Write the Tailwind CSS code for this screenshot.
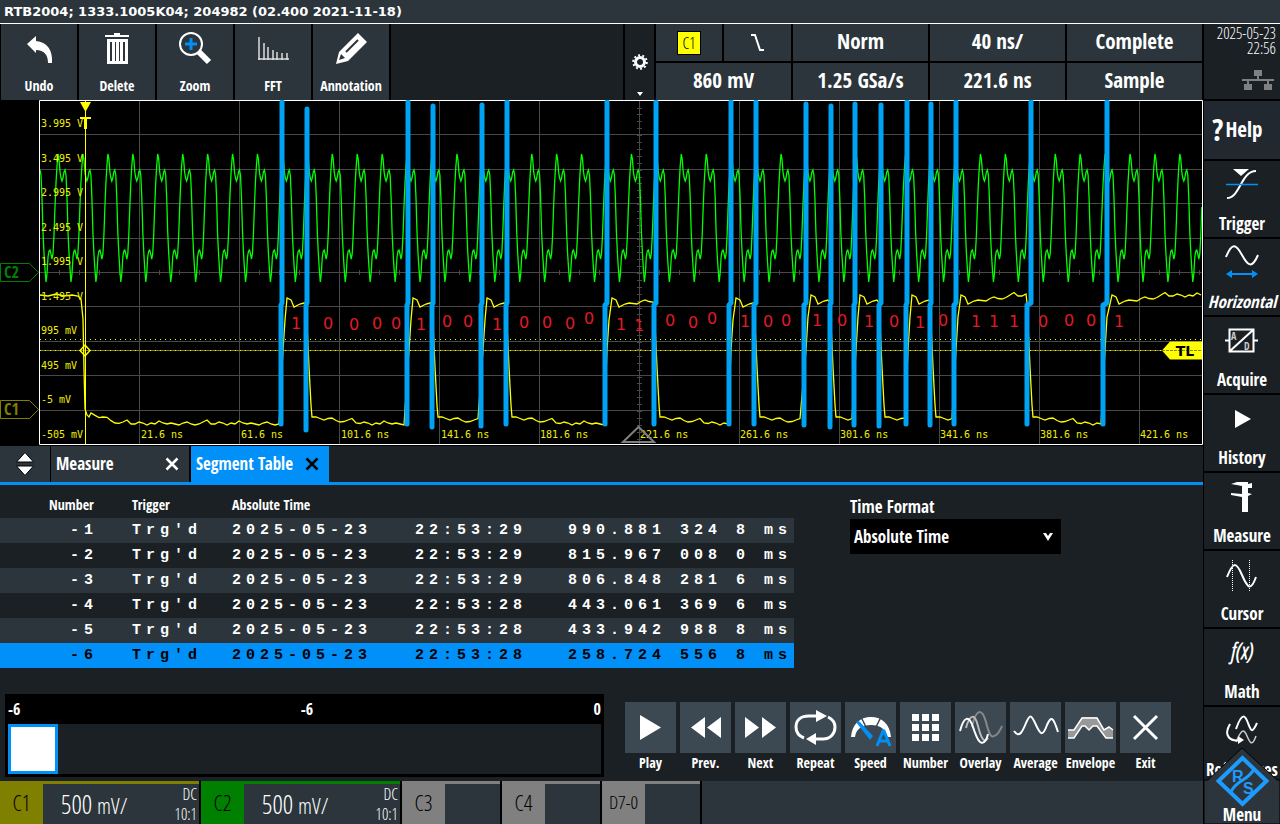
<!DOCTYPE html>
<html lang="en">
<head>
    <meta charset="UTF-8">
    <meta name="viewport" content="width=device-width, initial-scale=1.0">
    <title>RTB2004</title>
    <script src="https://cdn.jsdelivr.net/npm/@tailwindcss/browser@4"></script>
</head>

<body class="bg-black text-white min-h-screen flex flex-col font-['Liberation_Sans_Narrow','Open_Sans_Condensed','Noto_Sans',sans-serif]">

    <!-- title bar -->
    <header class="h-6 shrink-0 bg-[#2b353b] border-b border-white px-1 text-[13px] leading-6 font-bold font-['DejaVu_Sans',sans-serif]">RTB2004; 1333.1005K04; 204982 (02.400 2021-11-18)</header>

    <div class="flex flex-1">
        <div class="flex-1 min-w-0 flex flex-col">

            <!-- toolbar -->
            <div class="flex gap-0.5 h-[76px] pl-px pr-px">
                <button class="w-[76px] bg-[#2b353b] flex flex-col items-center justify-between pt-1.5 pb-1 text-sm leading-5 font-bold">
                    <svg class="size-9" viewBox="0 0 36 36"><path d="M6 14 15 6v5c11 1 17 9 16 22h-4c0-8-4-13-12-13v3z" fill="#fff"/></svg>
                    Undo
                </button>
                <button class="w-[76px] bg-[#2b353b] flex flex-col items-center justify-between pt-1.5 pb-1 text-sm leading-5 font-bold">
                    <svg class="size-9" viewBox="0 0 36 36"><path d="M6 5h9V3h6v2h9v2H6zM8 9h21v25H8zM11 12v19h2V12zm5 0v19h1V12zm4 0v19h1V12zm4 0v19h2V12z" fill="#fff" fill-rule="evenodd"/></svg>
                    Delete
                </button>
                <button class="w-[76px] bg-[#2b353b] flex flex-col items-center justify-between pt-1.5 pb-1 text-sm leading-5 font-bold">
                    <svg class="size-9" viewBox="0 0 36 36" fill="none"><path d="m22 22 10 10" stroke="#fff" stroke-width="6"/><circle cx="14" cy="14" r="11" fill="#2b353b" stroke="#fff" stroke-width="2"/><path d="M14 8v12M8 14h12" stroke="#0090f8" stroke-width="3"/></svg>
                    Zoom
                </button>
                <button class="w-[76px] bg-[#2b353b] flex flex-col items-center justify-between pt-1.5 pb-1 text-sm leading-5 font-bold">
                    <svg class="size-9" viewBox="0 0 36 36" fill="none" stroke="#ddd" stroke-width="1.5"><path d="M3 29h31M4 30V7M9 30V13M13 30V17M18 30V20M22 30V22M27 30V23M32 30V23"/></svg>
                    FFT
                </button>
                <button class="w-[76px] bg-[#2b353b] flex flex-col items-center justify-between pt-1.5 pb-1 text-sm leading-5 font-bold">
                    <svg class="size-9" viewBox="0 0 36 36"><path d="M25 3 34 12 15 31 3 34 6 22zM8 24l-2 6 6-2z" fill="#fff" fill-rule="evenodd"/><path d="m13 22 12-12" stroke="#2b353b" stroke-width="2"/></svg>
                    Annotation
                </button>
                <div class="flex-1 bg-[#1a2024]"></div>
                <button aria-label="Settings" class="w-[29px] bg-[#1a2024] flex flex-col items-center justify-end gap-[22px] pb-1">
                    <svg class="size-4" viewBox="0 0 16 16" fill="none" stroke="#fff"><circle cx="8" cy="8" r="4.5" stroke-width="3"/><circle cx="8" cy="8" r="6.8" stroke-width="2" stroke-dasharray="2 2.27"/></svg>
                    <svg class="w-1.5 h-1" viewBox="0 0 6 4"><path d="M0 0h6L3 4z" fill="#fff"/></svg>
                </button>
                <!-- status cells -->
                <div class="w-[546px] grid grid-cols-[66px_67px_repeat(3,1fr)] grid-rows-2 gap-0.5 text-[21px] text-center">
                    <button class="bg-[#2b353b] grid place-items-center"><span class="bg-[#ff0] text-black w-6 h-6 border border-black text-base leading-[22px] font-['Open_Sans_Condensed_Light',sans-serif]">C1</span></button>
                    <button aria-label="Slope" class="bg-[#2b353b] grid place-items-center"><svg class="w-4 h-5" viewBox="0 0 16 20" fill="none" stroke="#fff" stroke-width="2"><path d="M1 2h4l5 15h4"/></svg></button>
                    <button class="bg-[#2b353b] pb-px">Norm</button>
                    <button class="bg-[#2b353b] pb-px">40 ns/</button>
                    <button class="bg-[#2b353b] pb-px">Complete</button>
                    <button class="bg-[#2b353b] pb-px col-span-2">860 mV</button>
                    <button class="bg-[#2b353b] pb-px">1.25 GSa/s</button>
                    <button class="bg-[#2b353b] pb-px">221.6 ns</button>
                    <button class="bg-[#2b353b] pb-px">Sample</button>
                </div>
            </div>

            <!-- waveform display -->
            <svg id="scope" class="block w-full" viewBox="0 100 1203 345" fill="none">
                <g id="grid" stroke="#484848"></g>
                <path d="M40 339.500h1162" stroke="#ff0" stroke-dasharray="1 4"/>
                <path d="M40 350.500h1162" stroke="#808000"/>
                <path d="M40 350.500h1162" stroke="#ff0" stroke-dasharray="1 4"/>
                <path id="c2" stroke="#0f0" stroke-width="1.3"/>
                <path id="c1" stroke="#ff0" stroke-width="1.3"/>
                <g id="labels" fill="#f0f000" class="text-[10px] font-['DejaVu_Sans_Mono',monospace]"></g>
                <path d="M85.500 100v344" stroke="#ff0"/>
                <path d="M80 102h11l-5 9h-1zM80 117h11v2h-4v10h-3v-10h-4z" fill="#ff0"/>
                <path d="m85 345 5 5.500-5 5.500-5-5.500z" stroke="#ff0" stroke-width="1.500"/>
                <path d="M638.500 427 623 442h31z" stroke="#808080" stroke-width="2"/>
                <path d="m1162 350.500 8-9h32v18h-32z" fill="#ff0"/>
                <path d="M1162 350.500h40" stroke="#880" stroke-dasharray="3 1"/>
                <text x="1185" y="356" text-anchor="middle" fill="#000" class="text-sm font-bold font-['DejaVu_Sans',sans-serif]">TL</text>
                <path d="M39.500 444.500v-344h1163v344z" stroke="#fff"/>
                <g id="bars" stroke="#00a2f3" stroke-width="5" stroke-linecap="round" stroke-linejoin="round"></g>
                <g id="bits" fill="#e01b24" text-anchor="middle" class="text-base font-['DejaVu_Sans',sans-serif]"></g>
                <path d="M.5 263.500h29l9 9-9 9h-29z" stroke="#008000"/>
                <path d="M.5 400.500h29l9 9-9 9h-29z" stroke="#808000"/>
                <text x="4" y="278" fill="#008000" class="text-base font-bold">C2</text>
                <text x="4" y="415" fill="#808000" class="text-base font-bold">C1</text>
            </svg>

            <!-- tabs -->
            <div class="mt-px bg-[#1a2024] border-b-3 border-[#0090f8] flex h-[39px]">
                <button aria-label="Resize" class="w-[50px] bg-[#2b353b] grid place-items-center"><svg class="w-5 h-6" viewBox="0 0 20 24" fill="#fff" stroke="#000"><path d="M10 .5 18.500 10h-17zM10 23.500 18.500 14h-17z"/></svg></button>
                <div class="w-[141px] bg-[#2b353b] border-l border-r-2 border-black flex items-center justify-between pl-[5px] pr-2.5">
                    <button class="text-[17px] font-bold">Measure</button>
                    <button aria-label="Close Measure"><svg class="size-3.5" viewBox="0 0 14 14" stroke="#fff" stroke-width="2.500"><path d="m1.500 1.500 11 11M12.500 1.500l-11 11"/></svg></button>
                </div>
                <div class="w-[138px] bg-[#0090f8] flex items-center justify-between pl-[5px] pr-2.5">
                    <button class="text-[17px] font-bold">Segment Table</button>
                    <button aria-label="Close Segment Table"><svg class="size-3.5" viewBox="0 0 14 14" stroke="#000" stroke-width="2.500"><path d="m1.500 1.500 11 11M12.500 1.500l-11 11"/></svg></button>
                </div>
            </div>

            <!-- segment table -->
            <main class="flex-1 bg-[#1a2024] flex flex-col justify-between">
                <div class="flex items-start gap-14 pt-2">
                    <table class="w-[794px] table-fixed border-separate border-spacing-0">
                        <thead class="text-sm font-bold text-left">
                            <tr class="h-[25px]"><th class="w-[132px] pl-[49px] pb-0.5">Number</th><th class="w-[100px] pb-0.5">Trigger</th><th class="w-[183px] pb-0.5">Absolute Time</th><th class="w-[153px]"></th><th></th></tr>
                        </thead>
                        <tbody id="segments" class="text-[15px] leading-6 font-bold whitespace-pre font-['Liberation_Mono',monospace] tracking-[5px]"></tbody>
                    </table>
                    <div class="w-[211px] pt-0.5 font-bold text-[17px]">
                        <label for="format" class="block leading-6">Time Format</label>
                        <div class="relative">
                            <select id="format" class="appearance-none w-full h-[35px] bg-black px-1"><option>Absolute Time</option></select>
                            <svg class="absolute right-2 top-3.5 w-2.5 h-2" viewBox="0 0 10 8"><path d="M0 0h3l2 3 2-3h3L5 8z" fill="#fff"/></svg>
                        </div>
                    </div>
                </div>

                <div class="flex items-start gap-[21px] pl-[5px] pb-1">
                    <!-- timeline -->
                    <div class="w-[599px] bg-black p-[3px] pt-0 text-base font-bold">
                        <div class="flex justify-between h-[30px] leading-[30px]"><span>-6</span><span>-6</span><span>0</span></div>
                        <div class="bg-[#1a2024] h-[50px]"><div class="size-[50px] bg-white border-3 border-[#0090f8]"></div></div>
                    </div>
                    <!-- player -->
                    <div id="player" class="grid grid-cols-[repeat(10,51px)] gap-x-1 pt-2 text-sm font-bold"></div>
                </div>
            </main>

            <!-- channel bar -->
            <footer class="h-[43px] flex gap-0.5 font-['Open_Sans_Condensed_Light','Open_Sans_Condensed',sans-serif]">
                <button class="w-[199px] border-t-3 border-[#808000] flex bg-[#2b353b]">
                    <span class="w-[43px] h-[43px] -mt-[3px] bg-[#808000] text-black text-[22px] leading-[43px]">C1</span>
                    <span class="flex-1 text-left text-[26px] leading-10 pl-[18px]">500 <span class="text-[22px]">mV/</span></span>
                    <span class="text-base text-right pr-0.5 leading-5">DC<br>10:1</span>
                </button>
                <button class="w-[199px] border-t-3 border-[#008000] flex bg-[#2b353b]">
                    <span class="w-[43px] h-[43px] -mt-[3px] bg-[#008000] text-black text-[22px] leading-[43px]">C2</span>
                    <span class="flex-1 text-left text-[26px] leading-10 pl-[18px]">500 <span class="text-[22px]">mV/</span></span>
                    <span class="text-base text-right pr-0.5 leading-5">DC<br>10:1</span>
                </button>
                <button class="w-[98px] border-t-3 border-[#808080] bg-[#2b353b]"><span class="block w-[43px] h-[43px] -mt-[3px] bg-[#808080] text-black text-[22px] leading-[43px]">C3</span></button>
                <button class="w-[98px] border-t-3 border-[#808080] bg-[#2b353b]"><span class="block w-[43px] h-[43px] -mt-[3px] bg-[#808080] text-black text-[22px] leading-[43px]">C4</span></button>
                <button class="w-[98px] border-t-3 border-[#808080] bg-[#2b353b]"><span class="block w-[43px] h-[43px] -mt-[3px] bg-[#808080] text-black text-[19px] leading-[43px]">D7-0</span></button>
                <div class="flex-1 bg-[#2b353b]"></div>
            </footer>
        </div>

        <!-- side menu -->
        <aside class="w-[77px] border-l border-black relative flex flex-col">
            <div class="h-[75px] bg-[#1a2024] text-base leading-[15px] text-right pt-0.5 pr-1 font-['Open_Sans_Condensed_Light','Open_Sans_Condensed',sans-serif]">
                <p>2025-05-23</p>
                <p>22:56</p>
                <svg class="w-8 h-5 ml-auto mr-0.5 mt-3.5" viewBox="0 0 32 20" fill="#808080"><path d="M12 0h8v6h-3v3h15v2h-5v3h3v6h-8v-6h3v-3H7v3h3v6H2v-6h3v-3H0V9h15V6h-3z"/></svg>
            </div>
            <button class="mt-0.5 h-[58px] bg-[#212830] text-[21px] flex items-center gap-0.5 pl-2"><span class="text-[30px] leading-9 font-bold">?</span>Help</button>
            <div id="side" class="flex flex-col"></div>
            <button class="absolute bottom-0 left-0 w-[76px] h-[78px] grid">
                <svg class="col-start-1 row-start-1 w-full h-full" viewBox="0 0 76 78" fill="none"><path d="M0 78V34h4L38 2l35 32h3v44z" fill="#2b353b" stroke="#000"/><path d="m38.500 12 24 23-24 23-24-23z" stroke="#1e9bff" stroke-width="4"/><path d="M27 46c5-12 17-11 23-23" stroke="#1e9bff" stroke-width="3"/><text x="28" y="36" fill="#1e9bff" class="text-base font-bold font-['Liberation_Sans',sans-serif]">R</text><text x="39" y="48" fill="#1e9bff" class="text-base font-bold font-['Liberation_Sans',sans-serif]">S</text></svg>
                <span class="col-start-1 row-start-1 self-end justify-self-center text-[17px] leading-[18px] font-bold">Menu</span>
            </button>
        </aside>
    </div>

    <script>
        const put = (id, html) => document.getElementById(id).innerHTML = html;

        // grid with centre ticks
        let d = "";
        for (let x = 139.5; x < 1200; x += 100) d += `M${x} 101v343`;
        [134, 169, 203, 238, 272, 306, 341, 375, 410].forEach(y => d += `M40 ${y + 0.5}h1162`);
        for (let x = 59.5; x < 1200; x += 20) d += `M${x} 270v5`;
        for (let y = 107.5; y < 440; y += 6.9) d += `M637 ${Math.round(y) + 0.5}h5`;
        put("grid", `<path d="${d}"/>`);

        // axis labels
        const volts = ["3.995 V", "3.495 V", "2.995 V", "2.495 V", "1.995 V", "1.495 V", "995 mV", "495 mV", "-5 mV", "-505 mV"];
        const times = [21.6, 61.6, 101.6, 141.6, 181.6, 221.6, 261.6, 301.6, 341.6, 381.6, 421.6];
        put("labels", volts.map((v, i) => `<text x="41" y="${Math.round(127 + i * 34.5)}">${v}</text>`).join("")
            + times.map((t, i) => `<text x="${141 + i * 100 - (i > 3 ? 1 : 0)}" y="438">${t} ns</text>`).join(""));

        // C2: clock, one sample per pixel of a period
        const clock = [154, 159, 172, 178, 181, 178, 172, 170, 175, 198, 232, 253, 269, 282, 274, 257, 251, 250, 254, 259, 254, 235, 207, 183, 166];
        const c2 = [];
        for (let k = -1; k < 46; k++) clock.forEach((y, i) => {
            const x = 58 + k * 24.93 + i * 0.997;
            if (x >= 40 && x <= 1202) c2.push(`${x.toFixed(1)} ${y}`);
        });
        document.getElementById("c2").setAttribute("d", "M" + c2.join("L"));

        // marked edges: top x, top y, bottom x, bottom y
        const edges = [[282, 102, 281, 424], [307, 109, 306, 430], [408, 102, 407, 424], [433, 106, 432, 427], [482, 105, 481, 426], [507, 102, 506, 424], [607, 102, 605, 424], [656, 102, 654, 424], [731, 102, 729, 424], [756, 102, 754, 424], [806, 104, 804, 425], [831, 106, 830, 427], [855, 104, 854, 425], [881, 105, 879, 426], [907, 102, 906, 424], [931, 104, 930, 425], [956, 102, 954, 424], [1031, 102, 1027, 424], [1107, 102, 1103, 424]];
        put("bars", edges.map(e => `<path d="M${e[0]} ${e[1]}V303L${e[2]} 305V${e[3]}"/>`).join(""));

        // C1: data
        const noise = [0, 1, 2, 0, -1, 1, 2, 1, -1, -3, 1, 1, -1, 0, 2, 0, 1, -2, 0, 1];
        let c1 = "M40 295l8 1 8-2 8 2 8-1 6 1 3 3 2 20 1 50 1 40 2 6 2 2";
        for (let x = 91, i = 0; x < 281; x += 4, i++) c1 += `L${x} ${413 + Math.min(10, (x - 91) / 3) + noise[i % 20]}`;
        edges.forEach((e, n) => {
            const x0 = e[0], end = n < 18 ? edges[n + 1][2] : 1202;
            const up = x0 > 800 ? 3 : 0;
            if (n % 2 == 0) {
                c1 += `L${e[2] + 2} 350L${e[2] + 4} ${320 - up}L${x0 + 5} ${298 - up}L${x0 + 9} ${300 - up}L${x0 + 12} ${307 - up}L${x0 + 18} ${304 - up}`;
                for (let x = x0 + 22, i = 0; x < end; x += 4, i++) c1 += `L${x} ${Math.max(298, 303 - i / 2) - up + noise[i % 20]}`;
            } else {
                c1 += `L${e[2]} 303L${e[2] + 3} 367L${e[2] + 5} 405L${e[2] + 6} 417`;
                for (let x = e[2] + 10, i = 0; x < end; x += 4, i++) c1 += `L${x} ${Math.min(423, 417 + i / 2) + noise[i % 20]}`;
            }
        });
        document.getElementById("c1").setAttribute("d", c1);

        // decoded bits
        const bits = [[1, 296, 323], [0, 328, 323], [0, 354, 324], [0, 377, 323], [0, 396, 323], [1, 421, 324], [0, 447, 321], [0, 468, 321], [1, 497, 324], [0, 524, 322], [0, 547, 322], [0, 570, 323], [0, 589, 318], [1, 621, 324], [1, 639, 325], [0, 670, 320], [0, 693, 322], [0, 712, 318], [1, 745, 321], [0, 768, 321], [0, 786, 320], [1, 817, 320], [0, 842, 320], [1, 869, 321], [0, 894, 321], [1, 920, 322], [0, 943, 320], [1, 976, 321], [1, 994, 321], [1, 1014, 321], [0, 1043, 321], [0, 1069, 320], [0, 1091, 320], [1, 1119, 321]];
        put("bits", bits.map(b => `<text x="${b[1]}" y="${b[2] + 6}">${b[0]}</text>`).join(""));

        // segment rows
        const rows = [["29", "990.881 324 8"], ["29", "815.967 008 0"], ["29", "806.848 281 6"], ["28", "443.061 369 6"], ["28", "433.942 988 8"], ["28", "258.724 556 8"]];
        put("segments", rows.map((r, i) => `
            <tr class="h-[25px] ${i == 5 ? "bg-[#0090f8] text-black" : i % 2 ? "" : "bg-[#2b353b]"}">
                <td class="pl-[70px]">-${i + 1}</td><td>Trg'd</td><td>2025-05-23</td><td>22:53:${r[0]}</td><td>${r[1]} ms</td>
            </tr>`).join(""));

        // player buttons
        const player = [
            ["Play", `<path d="M15 13v25l21-12.500z" fill="#fff"/>`],
            ["Prev.", `<path d="M25 15v21L11 25.500zM41 15v21L27 25.500z" fill="#fff"/>`],
            ["Next", `<path d="M10 15v21l14-10.500zM27 15v21l14-10.500z" fill="#fff"/>`],
            ["Repeat", `<path d="M27 14H19C9 14 6 20 6 25c0 6 3 9 8 11M38 15c4 2 7 5 7 10 0 6-4 12-12 12h-9" stroke="#fff" stroke-width="3"/><path d="M26 8v12l11-6zM26 31v12l-10-6z" fill="#fff"/>`],
            ["Speed", `<path d="M6 35C7 22 15 15 26 15s19 7 20 20h-4c-1-8-7-12-16-12S11 27 10 35z" fill="#fff"/><path d="m16 15 5 10M36 15l-5 10" stroke="#3c4852" stroke-width="1.500"/><path d="m11 20 3-1 14 15-3 4z" fill="#0090f8"/><path d="m32 44 6-15h1l6 15M34 39h9" stroke="#0090f8" stroke-width="3"/>`],
            ["Number", `<path d="M12 12h7v7h-7zM22 12h7v7h-7zM32 12h7v7h-7zM12 22h7v7h-7zM22 22h7v7h-7zM32 22h7v7h-7zM12 32h7v7h-7zM22 32h7v7h-7zM32 32h7v7h-7z" fill="#fff"/>`],
            ["Overlay", `<path d="M17 25c4-19 10-19 14-5 3 12 5 16 8 14 4-1 6-5 8-10" stroke="#888" stroke-width="2"/><path d="M11 26c4-15 9-14 12-2s6 18 10 12" stroke="#bbb" stroke-width="2"/><path d="M5 29C9 14 14 13 18 25s7 18 11 15c2-1 3-4 4-8" stroke="#fff" stroke-width="2"/>`],
            ["Average", `<path d="M4 29c5 7 8 2 12-8 4-9 5-9 10 2s7 11 11 0c4-9 6-9 11 7" stroke="#fff" stroke-width="2"/>`],
            ["Envelope", `<path d="M3 28h6l8-13h15l7 13 5-3 4 3v8h-7l-9-12h-4l-4 4-4-4h-3l-8 12H3z" fill="#999"/><path d="M3 28h6l8-12h15l7 12 5-3 4 3M3 36h6l8-12h3l4 4 4-4h4l9 12h7" stroke="#fff" stroke-width="1.500"/>`],
            ["Exit", `<path d="m14 14 23 23M37 14 14 37" stroke="#fff" stroke-width="3"/>`],
        ];
        put("player", player.map(p => `
            <button class="flex flex-col items-center whitespace-nowrap"><svg class="size-[51px] bg-[#3c4852]" viewBox="0 0 51 51" fill="none">${p[1]}</svg><span class="leading-5 w-0 flex justify-center">${p[0]}</span></button>`).join(""));

        // side menu entries
        const side = [
            ["Trigger", `<path d="M7 35c13 0 14-27 29-27" stroke="#fff" stroke-width="2"/><path d="M13 6h16l-8 7z" fill="#fff"/><path d="M6 21.500h32" stroke="#0090f8" stroke-width="1.500"/>`],
            ["Horizontal", `<path d="M6 16C12 1 16 3 22 14s10 14 16 0" stroke="#fff" stroke-width="2"/><path d="M10 33h24" stroke="#0090f8" stroke-width="2"/><path d="m6 33 6-4v8zM38 33l-6-4v8z" fill="#0090f8"/>`],
            ["Acquire", `<path d="M9.500 10.500h24v22h-24zM5 21.500h4M34 21.500h4M10 32 33 11" stroke="#fff" stroke-width="2"/><text x="11" y="21" fill="#ccc" class="text-[10px]">A</text><text x="24" y="31" fill="#ccc" class="text-[10px]">D</text>`],
            ["History", `<path d="M15 13v18l16-9z" fill="#fff"/>`],
            ["Measure", `<path d="M11 9 17 7h11v2l4-1v5h-4v5l4 1-4 2v16h-6V22l-11-2v-2l11 1v-8z" fill="#fff"/>`],
            ["Cursor", `<path d="M7 24c6-15 9-16 15-2s9 16 14 2" stroke="#fff" stroke-width="2"/><path d="M12.500 7v32M29.500 7v32" stroke="#fff" stroke-dasharray="1 1"/>`],
            ["Math", `<text x="22" y="28" text-anchor="middle" fill="#fff" class="text-[22px] italic font-['Open_Sans_Condensed_Light','Open_Sans_Condensed',sans-serif]">f(x)</text>`],
            ["References", `<path d="M16 20C22 3 25 6 28 14s4 11 9 0" stroke="#fff" stroke-width="2"/><path d="M16 33c6-14 8-13 11-6s5 11 9 0" stroke="#ccc" stroke-width="1.500"/><path d="M10 15c-7 12 0 18 11 16" stroke="#fff" stroke-width="2"/><path d="m18 27 6 4-6 4z" fill="#fff"/>`],
        ];
        put("side", side.map(s => `
            <button class="mt-0.5 h-[76px] pt-0.5 bg-[#1a2024] flex flex-col items-center justify-between text-[17px] leading-6 font-bold ${s[0] == "Horizontal" ? "italic" : ""}"><svg class="w-11 h-[46px]" viewBox="0 0 44 46" fill="none">${s[1]}</svg><span class="flex justify-center w-0 pb-px">${s[0]}</span></button>`).join(""));
    </script>
</body>
</html>
